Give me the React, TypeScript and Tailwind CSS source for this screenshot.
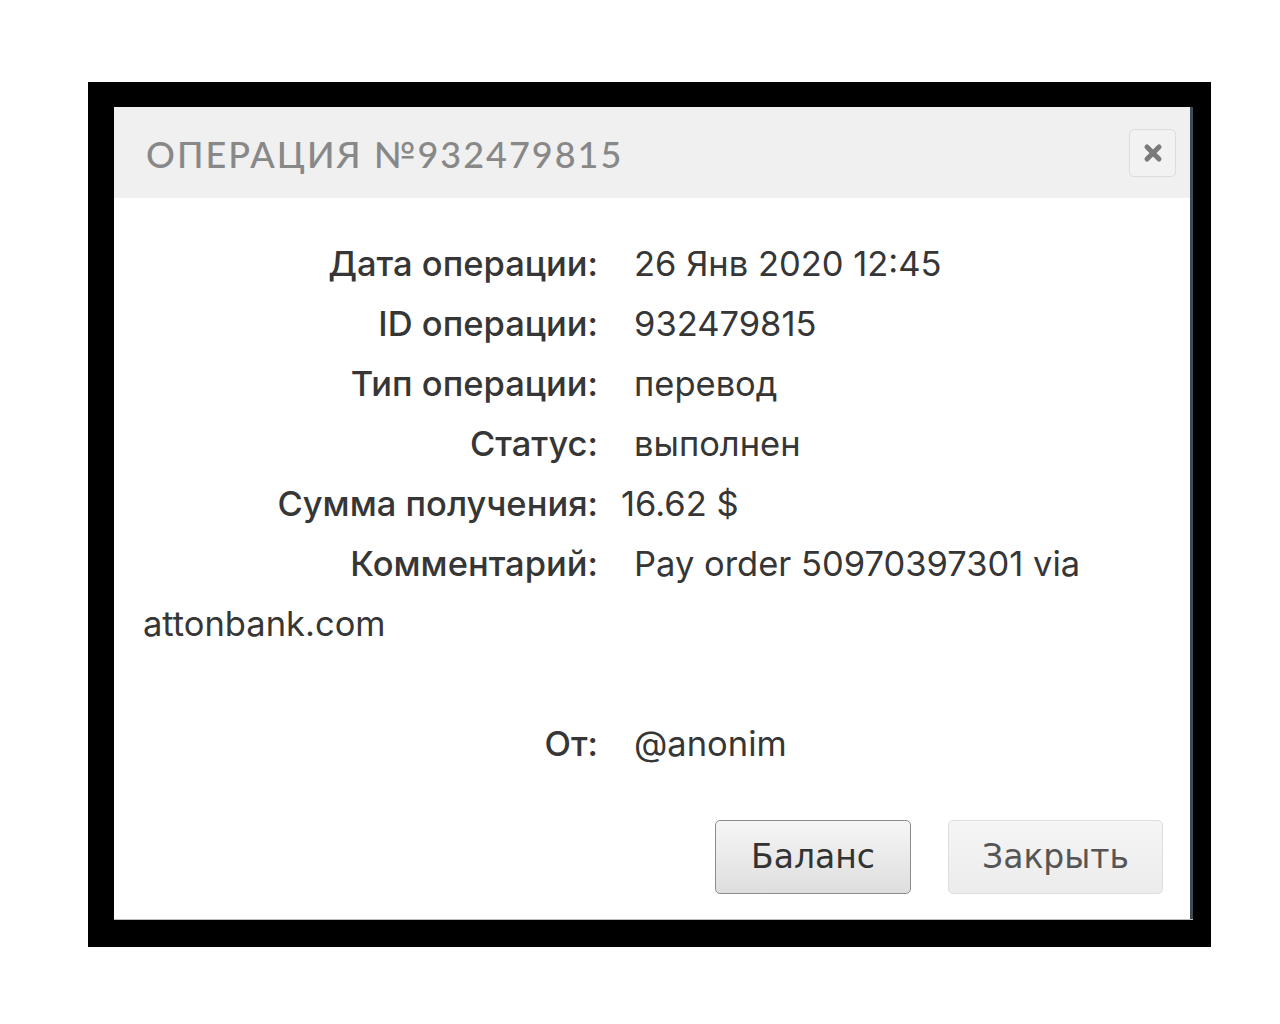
import React from "react";

type Row = {
  label: string;
  value: React.ReactNode;
  gap?: string;
};

const rows: Row[] = [
  { label: "Дата операции:", value: "26 Янв 2020 12:45" },
  { label: "ID операции:", value: "932479815" },
  { label: "Тип операции:", value: "перевод" },
  { label: "Статус:", value: "выполнен" },
  { label: "Сумма получения:", value: "16.62 $", gap: "pl-[23px]" },
];

function CloseIcon() {
  return (
    <svg width="20" height="20" viewBox="0 0 20 20">
      <path d="M4 4 L16 16 M16 4 L4 16" stroke="#7a7a7a" strokeWidth="5" strokeLinecap="round" />
    </svg>
  );
}

function InfoRow({ label, value, gap }: Row) {
  return (
    <div className="h-[60px] leading-[60px] whitespace-nowrap">
      <span className="inline-block w-[455px] text-right font-medium">{label}</span>
      <span className={gap ?? "pl-[36px]"}>{value}</span>
    </div>
  );
}

export default function App() {
  return (
    <div className="min-h-screen bg-white pl-[88px] pt-[82px]">
      <div className="h-[865px] w-[1123px] bg-black pl-[26px] pt-[25px]">
        <div className="flex h-[812px] w-[1079px] flex-col border-r-[3px] border-[#3e4b55] bg-white shadow-[0_1px_0_#bbb]">
          <div className="flex h-[91px] items-center justify-between bg-[#f0f0f0] pl-[32px] pr-[14px]">
            <h1
              className="pt-[3px] text-[36px] tracking-[2px] text-[#888]"
              style={{ fontFamily: "Lato, 'Noto Sans', sans-serif", fontWeight: 500 }}
            >
              ОПЕРАЦИЯ №932479815
            </h1>
            <button className="flex h-[48px] w-[47px] items-center justify-center rounded-[5px] border border-[#dcdcdc] bg-[#f2f2f2]">
              <CloseIcon />
            </button>
          </div>

          <div
            className="flex flex-1 flex-col pl-[29px] pr-[27px] pt-[36px] text-[34.5px] text-[#363636]"
            style={{ fontFamily: "Inter, 'Open Sans', sans-serif" }}
          >
            {rows.map((row) => (
              <InfoRow key={row.label} {...row} />
            ))}
            <div className="leading-[60px]">
              <span className="inline-block w-[455px] text-right font-medium">Комментарий:</span>
              <span className="pl-[36px]">Pay order 50970397301 via</span>
              <br />
              attonbank.com
            </div>
            <div className="h-[60px]" />
            <InfoRow label="От:" value="@anonim" />

            <div
              className="mt-[46px] flex justify-end gap-[37px] text-[33px]"
              style={{ fontFamily: "'DejaVu Sans', Verdana, sans-serif" }}
            >
              <button className="h-[74px] w-[196px] rounded-[5px] border border-[#8c8c8c] bg-gradient-to-b from-[#f6f6f6] to-[#dedede] text-[#333]">
                Баланс
              </button>
              <button className="h-[74px] w-[215px] rounded-[5px] border border-[#dddddd] bg-gradient-to-b from-[#f5f5f5] to-[#ececec] text-[#555]">
                Закрыть
              </button>
            </div>
          </div>
        </div>
      </div>
    </div>
  );
}
